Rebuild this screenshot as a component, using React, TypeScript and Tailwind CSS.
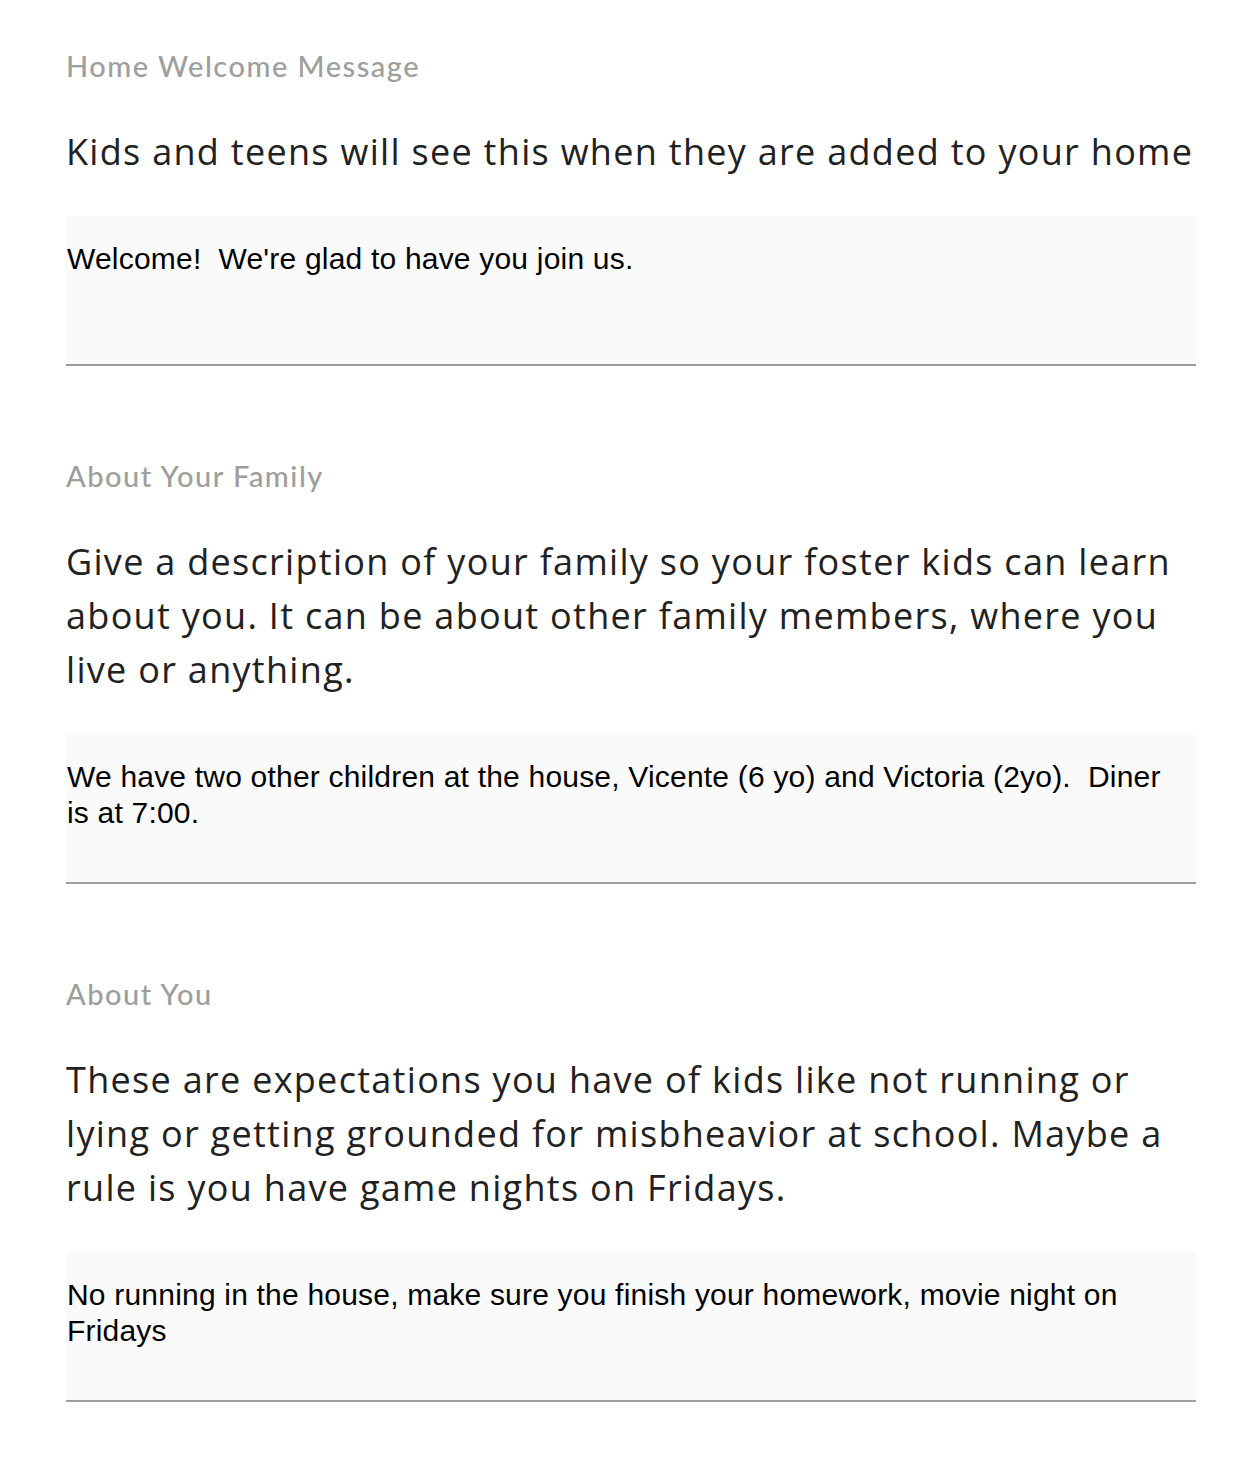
const sections = [
  {
    label: "Home Welcome Message",
    help: "Kids and teens will see this when they are added to your home",
    value: "Welcome!  We're glad to have you join us.",
  },
  {
    label: "About Your Family",
    help: "Give a description of your family so your foster kids can learn about you. It can be about other family members, where you live or anything.",
    value:
      "We have two other children at the house, Vicente (6 yo) and Victoria (2yo).  Diner is at 7:00.",
  },
  {
    label: "About You",
    help: "These are expectations you have of kids like not running or lying or getting grounded for misbheavior at school. Maybe a rule is you have game nights on Fridays.",
    value:
      "No running in the house, make sure you finish your homework, movie night on Fridays",
  },
];

function Field({ label, help, value }: { label: string; help: string; value: string }) {
  return (
    <div className="flex flex-col">
      <label className="font-['Lato',sans-serif] text-[29px] font-medium leading-[34px] tracking-[1.5px] text-[#9e9e9e]">
        {label}
      </label>
      <p className="mt-[42px] font-['Open_Sans',sans-serif] text-[36px] leading-[54px] tracking-[1.3px] text-[#212121]">
        {help}
      </p>
      <textarea
        defaultValue={value}
        className="mt-[37px] h-[150px] w-full resize-none overflow-hidden border-b-2 border-[#9e9e9e] bg-[#fafafa] pt-[25px] pr-[20px] pl-px font-['Liberation_Sans',sans-serif] text-[30px] leading-[36px] tracking-[0.2px] text-black outline-none"
      />
    </div>
  );
}

export default function App() {
  return (
    <div className="min-h-[1460px] bg-white pt-[49px]">
      <div className="ml-[66px] flex w-[1130px] flex-col gap-[93px]">
        {sections.map((s) => (
          <Field key={s.label} {...s} />
        ))}
      </div>
    </div>
  );
}
